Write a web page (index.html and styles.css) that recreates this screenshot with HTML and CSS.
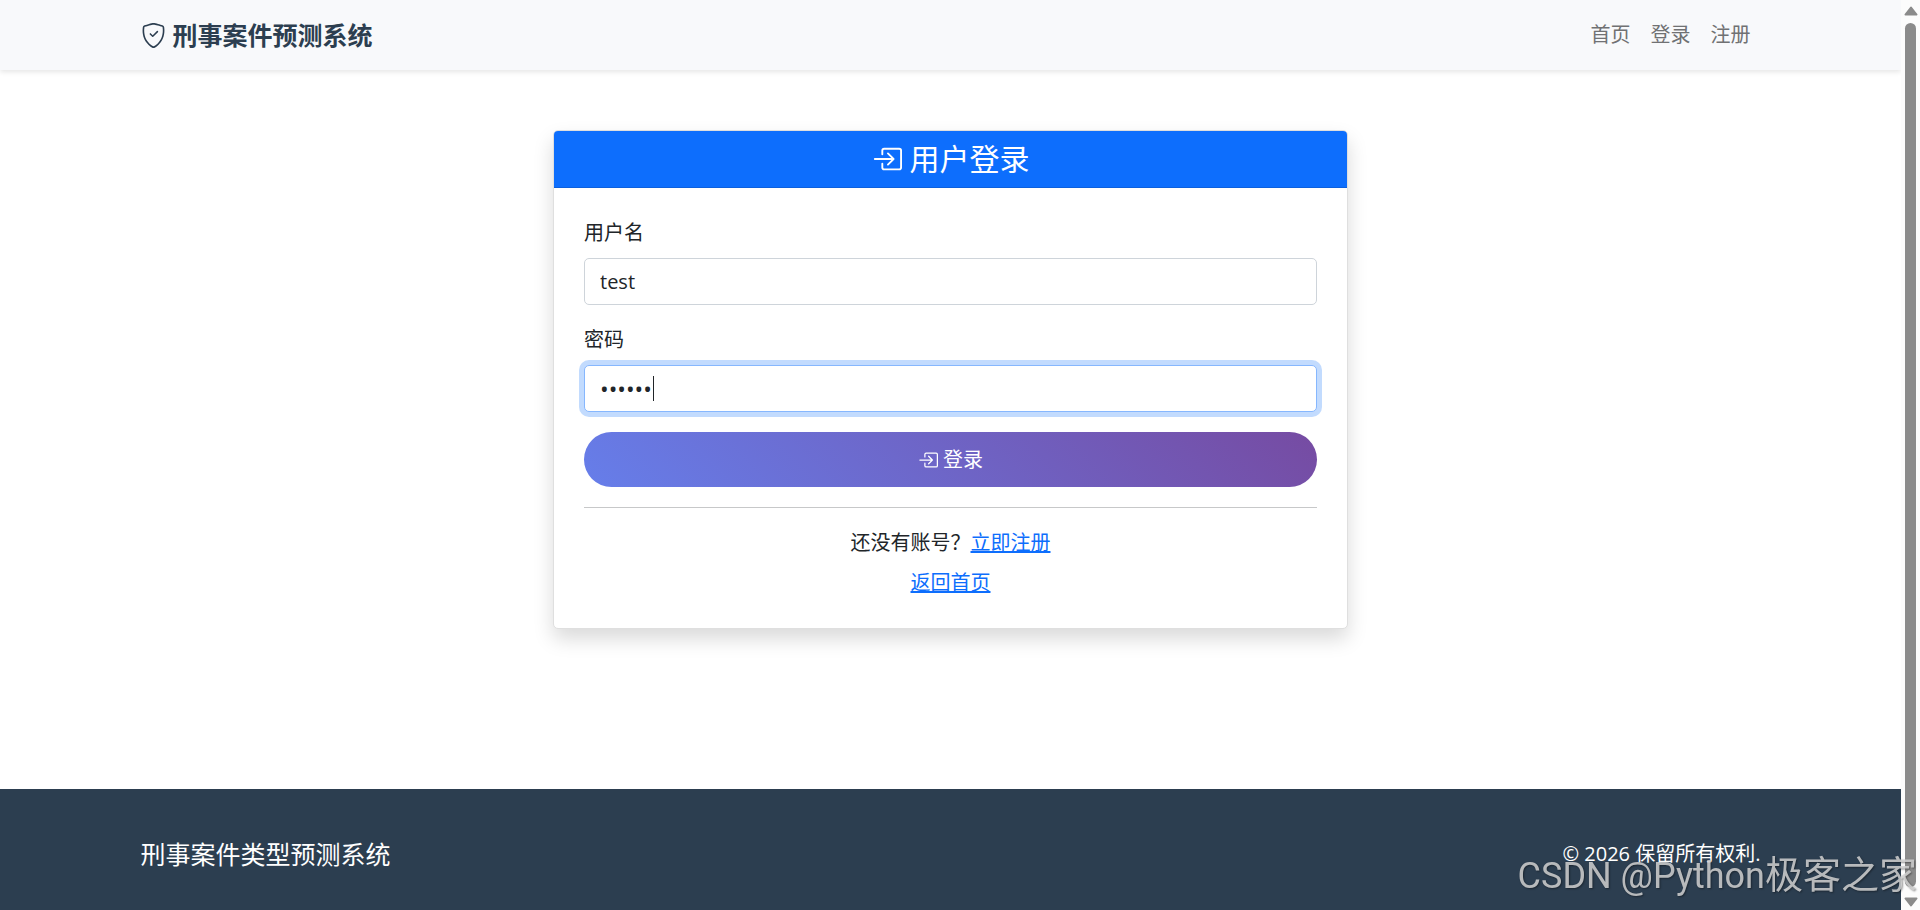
FILE: index.html
```
<!doctype html>
<html lang="zh-CN">
<head>
  <meta charset="utf-8" />
  <meta name="viewport" content="width=device-width,initial-scale=1" />
  <title>用户登录 - 刑事案件预测系统</title>
  <link rel="stylesheet" href="styles.css">
</head>
<body>

<nav class="navbar">
  <div class="container">
    <a class="brand" href="#">
      <svg class="icon" viewBox="0 0 16 16" aria-hidden="true">
        <path d="M5.338 1.59a61 61 0 0 0-2.837.856.48.48 0 0 0-.328.39c-.554 4.157.726 7.19 2.253 9.188a10.7 10.7 0 0 0 2.287 2.233c.346.244.652.42.893.533q.18.085.293.118a1 1 0 0 0 .101.025 1 1 0 0 0 .1-.025q.114-.034.294-.118c.24-.113.547-.29.893-.533a10.7 10.7 0 0 0 2.287-2.233c1.527-1.997 2.807-5.031 2.253-9.188a.48.48 0 0 0-.328-.39c-.651-.213-1.75-.56-2.837-.855C9.552 1.29 8.531 1.067 8 1.067c-.53 0-1.552.223-2.662.524zM5.072.56C6.157.265 7.31 0 8 0s1.843.265 2.928.56c1.11.3 2.229.655 2.887.87a1.54 1.54 0 0 1 1.044 1.262c.596 4.477-.787 7.795-2.465 9.99a11.8 11.8 0 0 1-2.517 2.453 7 7 0 0 1-1.048.625c-.28.132-.581.24-.829.24s-.548-.108-.829-.24a7 7 0 0 1-1.048-.625 11.8 11.8 0 0 1-2.517-2.453C1.928 10.487.545 7.169 1.141 2.692A1.54 1.54 0 0 1 2.185 1.43 63 63 0 0 1 5.072.56"/>
        <path d="M10.854 5.146a.5.5 0 0 1 0 .708l-3 3a.5.5 0 0 1-.708 0l-1.5-1.5a.5.5 0 1 1 .708-.708L7.5 7.793l2.646-2.647a.5.5 0 0 1 .708 0"/>
      </svg>
      <span>刑事案件预测系统</span>
    </a>
    <div class="nav-links">
      <a href="#">首页</a>
      <a href="#">登录</a>
      <a href="#">注册</a>
    </div>
  </div>
</nav>

<main>
  <div class="card">
    <h4 class="card-header">
      <svg class="icon" viewBox="0 0 16 16" aria-hidden="true">
        <path d="M6 3.5a.5.5 0 0 1 .5-.5h8a.5.5 0 0 1 .5.5v9a.5.5 0 0 1-.5.5h-8a.5.5 0 0 1-.5-.5v-2a.5.5 0 0 0-1 0v2A1.5 1.5 0 0 0 6.5 14h8a1.5 1.5 0 0 0 1.5-1.5v-9A1.5 1.5 0 0 0 14.5 2h-8A1.5 1.5 0 0 0 5 3.5v2a.5.5 0 0 0 1 0z"/>
        <path d="M11.854 8.354a.5.5 0 0 0 0-.708l-3-3a.5.5 0 1 0-.708.708L10.293 7.5H1.5a.5.5 0 0 0 0 1h8.793l-2.147 2.146a.5.5 0 0 0 .708.708z"/>
      </svg>
      <span>用户登录</span>
    </h4>
    <div class="card-body">
      <form>
        <div class="field">
          <label for="username">用户名</label>
          <input type="text" id="username" name="username" value="test" />
        </div>
        <div class="field">
          <label for="password">密码</label>
          <div class="password-box">
            <input type="password" id="password" name="password" value="123456" autofocus />
            <span class="caret" aria-hidden="true"></span>
          </div>
        </div>
        <button type="submit" class="btn">
          <svg class="icon" viewBox="0 0 16 16" aria-hidden="true">
            <path d="M6 3.5a.5.5 0 0 1 .5-.5h8a.5.5 0 0 1 .5.5v9a.5.5 0 0 1-.5.5h-8a.5.5 0 0 1-.5-.5v-2a.5.5 0 0 0-1 0v2A1.5 1.5 0 0 0 6.5 14h8a1.5 1.5 0 0 0 1.5-1.5v-9A1.5 1.5 0 0 0 14.5 2h-8A1.5 1.5 0 0 0 5 3.5v2a.5.5 0 0 0 1 0z"/>
            <path d="M11.854 8.354a.5.5 0 0 0 0-.708l-3-3a.5.5 0 1 0-.708.708L10.293 7.5H1.5a.5.5 0 0 0 0 1h8.793l-2.147 2.146a.5.5 0 0 0 .708.708z"/>
          </svg>
          <span>登录</span>
        </button>
      </form>
      <hr>
      <div class="links">
        <p>还没有账号？<a href="#">立即注册</a></p>
        <p><a href="#">返回首页</a></p>
      </div>
    </div>
  </div>
</main>

<footer class="footer">
  <div class="container">
    <h5>刑事案件类型预测系统</h5>
    <p>© 2026 保留所有权利.</p>
  </div>
</footer>

<div class="scrollbar" aria-hidden="true">
  <svg class="arrow" viewBox="0 0 14 10"><path d="M7 1.5 12.500 8.500H1.500Z"/></svg>
  <div class="thumb"></div>
  <svg class="arrow" viewBox="0 0 14 10"><path d="M7 8.500 1.500 1.500H12.500Z"/></svg>
</div>
<div class="watermark">CSDN @Python<span>极客之家</span></div>

<script>
const pwd = document.getElementById('password');
pwd.focus();
pwd.setSelectionRange(pwd.value.length, pwd.value.length);
</script>

</body>
</html>
```
FILE: styles.css
```
*{box-sizing:border-box;}
html{height:100%;overflow:hidden;}
body{margin:0;height:100%;overflow:hidden;padding-right:19px;display:flex;flex-direction:column;font-family:"Open Sans","Noto Sans CJK SC",sans-serif;font-size:20px;line-height:30px;color:#212529;background:#fff;}
h4,h5,p{margin:0;font-weight:400;}
a{color:#0d6efd;}
.icon{width:1em;height:1em;fill:currentColor;flex:none;}
.container{width:100%;max-width:1650px;margin:0 auto;padding:0 15px;display:flex;justify-content:space-between;align-items:center;}

.navbar{flex:none;padding:16px 0;background:#f8f9fb;box-shadow:0 2px 5px rgba(0,0,0,0.1);}
.brand{display:flex;align-items:center;gap:7px;font-size:25px;line-height:38px;font-weight:700;color:#2c3e50;text-decoration:none;}
.nav-links{display:flex;}
.nav-links a{padding:0 10px;color:#707173;text-decoration:none;}

main{flex:none;padding:60px 15px 160px;}
.card{width:100%;max-width:795px;margin:0 auto;border:1px solid #dfdfdf;border-radius:5px;background:#fff;box-shadow:0 10px 20px rgba(0,0,0,0.15);}
.card-header{display:flex;justify-content:center;align-items:center;gap:8px;padding:10px 20px;font-size:30px;line-height:36px;color:#fff;background:#0d6efd;border-bottom:1px solid #0c60dd;border-radius:4px 4px 0 0;}
.card-body{padding:30px;}
.field{margin-bottom:20px;}
.field label{display:block;margin-bottom:10px;}
.field input{display:block;width:100%;height:47px;padding:7px 15px;border:1px solid #ced4da;border-radius:5px;background:#fff;font:inherit;color:#212529;outline:none;}
.field input:focus{border-color:#86b7fe;box-shadow:0 0 0 5px rgba(13,110,253,0.25);}
.password-box{position:relative;}
.field input[type=password]{font-size:23px;caret-color:transparent;}
.caret{position:absolute;left:69px;top:11px;width:1px;height:25px;background:#212529;}
.btn{display:flex;justify-content:center;align-items:center;gap:5px;width:100%;height:55px;border:none;border-radius:30px;background:linear-gradient(45deg,#667eea,#764ba2);color:#fff;font:inherit;cursor:pointer;}
hr{margin:20px 0;border:none;border-top:1px solid #c7c8c9;}
.links{display:flex;flex-direction:column;gap:10px;text-align:center;}

.footer{flex:1 0 auto;padding:50px 0;background:#2c3e50;color:#fff;}
.footer h5{font-size:25px;line-height:30px;}

/* scroll rail on the right edge */
.scrollbar{position:fixed;top:0;right:0;bottom:0;width:19px;padding:6px 0 3px;display:flex;flex-direction:column;align-items:center;background:#fcfcfc;}
.arrow{flex:none;width:14px;height:10px;fill:#8b8b8b;stroke:#8b8b8b;stroke-width:2;stroke-linejoin:round;}
.thumb{flex:1;width:11px;margin:7px 0 10px;border-radius:6px;background:#8b8b8b;}
.watermark{position:fixed;right:3px;bottom:10px;font-family:Roboto,"Noto Sans CJK SC",sans-serif;font-size:36px;line-height:48px;color:rgba(210,210,210,0.85);text-shadow:1px 1px 2px rgba(0,0,0,0.4);white-space:nowrap;pointer-events:none;}
.watermark span{font-size:38px;}
```
